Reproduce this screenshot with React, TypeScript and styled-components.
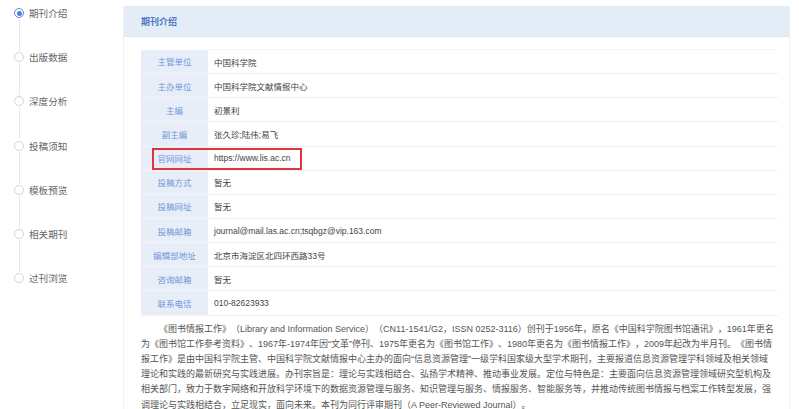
import styled, { createGlobalStyle } from "styled-components";

const GlobalStyle = createGlobalStyle`
  html, body {
    margin: 0;
    padding: 0;
    background: #fff;
  }
  body {
    font-family: "Liberation Sans", "Noto Sans CJK SC", sans-serif;
    color: #333;
  }
`;

const Page = styled.div`
  display: flex;
  width: 799px;
  height: 409px;
  overflow: hidden;
`;

const Sidebar = styled.ul`
  width: 123px;
  flex-shrink: 0;
  margin: 0;
  padding: 3px 0 0 14px;
  box-sizing: border-box;
  list-style: none;
  display: flex;
  flex-direction: column;
  gap: 24.2px;
`;

const NavItem = styled.li<{ $last?: boolean }>`
  position: relative;
  height: 20px;
  display: flex;
  align-items: center;
  gap: 5px;
  font-size: 9.6px;
  color: #666;

  &::after {
    content: "";
    display: ${(p) => (p.$last ? "none" : "block")};
    position: absolute;
    left: 5px;
    top: 16px;
    width: 1px;
    height: 32px;
    background: #e8e8e8;
  }
`;

const Radio = styled.span<{ $active?: boolean }>`
  width: 10px;
  height: 10px;
  box-sizing: border-box;
  border-radius: 50%;
  border: 1px solid ${(p) => (p.$active ? "#5b8ad8" : "#d4d4d4")};
  background: #fff;
  display: flex;
  align-items: center;
  justify-content: center;

  &::before {
    content: "";
    display: ${(p) => (p.$active ? "block" : "none")};
    width: 5px;
    height: 5px;
    border-radius: 50%;
    background: #4f80d4;
  }
`;

const Panel = styled.section`
  flex: 1;
  margin: 6px 9px 0 0;
  border-left: 1px solid #f2f2f2;
  border-right: 1px solid #eef0f3;
  display: flex;
  flex-direction: column;
`;

const PanelHeader = styled.div`
  height: 30px;
  flex-shrink: 0;
  display: flex;
  align-items: center;
  padding-left: 17px;
  background: #e4ecf7;
  border-bottom: 1px solid #dfe7f3;
  font-size: 9px;
  font-weight: bold;
  color: #4b79c4;
`;

const PanelBody = styled.div`
  padding: 12px 11px 0 17px;
`;

const InfoTable = styled.table`
  width: 100%;
  border-collapse: collapse;
  font-size: 8.5px;
`;

const Row = styled.tr`
  height: 24.15px;
`;

const Label = styled.td`
  position: relative;
  width: 67px;
  padding: 0;
  text-align: center;
  background: #e8eef8;
  color: #7097d8;
  border-bottom: 1px solid #f2f5fb;
`;

const Value = styled.td`
  padding: 0 0 0 6px;
  color: #444;
  border-bottom: 1px solid #eef0f3;
  border-top: 1px solid #f3f4f6;
`;

const Highlight = styled.span`
  position: absolute;
  left: 11px;
  top: 1px;
  width: 150px;
  height: 22px;
  box-sizing: border-box;
  border: 2px solid #e0343a;
  pointer-events: none;
`;

const Intro = styled.p`
  margin: 6px 0 0;
  font-size: 9px;
  line-height: 15.2px;
  text-indent: 2em;
  text-spacing-trim: space-all;
  color: #555;
`;

const navItems = ["期刊介绍", "出版数据", "深度分析", "投稿须知", "模板预览", "相关期刊", "过刊浏览"];

const infoRows: { label: string; value: string; mark?: boolean }[] = [
  { label: "主管单位", value: "中国科学院" },
  { label: "主办单位", value: "中国科学院文献情报中心" },
  { label: "主编", value: "初景利" },
  { label: "副主编", value: "张久珍;陆伟;易飞" },
  { label: "官网网址", value: "https://www.lis.ac.cn", mark: true },
  { label: "投稿方式", value: "暂无" },
  { label: "投稿网址", value: "暂无" },
  { label: "投稿邮箱", value: "journal@mail.las.ac.cn;tsqbgz@vip.163.com" },
  { label: "编辑部地址", value: "北京市海淀区北四环西路33号" },
  { label: "咨询邮箱", value: "暂无" },
  { label: "联系电话", value: "010-82623933" },
];

export default function App() {
  return (
    <>
      <GlobalStyle />
      <Page>
        <Sidebar>
          {navItems.map((item, i) => (
            <NavItem key={item} $last={i === navItems.length - 1}>
              <Radio $active={i === 0} />
              {item}
            </NavItem>
          ))}
        </Sidebar>

        <Panel>
          <PanelHeader>期刊介绍</PanelHeader>
          <PanelBody>
            <InfoTable>
              <tbody>
                {infoRows.map((row) => (
                  <Row key={row.label}>
                    <Label>
                      {row.label}
                      {row.mark && <Highlight />}
                    </Label>
                    <Value>{row.value}</Value>
                  </Row>
                ))}
              </tbody>
            </InfoTable>
            <Intro>
              《图书情报工作》（Library and Information Service）（CN11-1541/G2，ISSN 0252-3116）创刊于1956年，原名《中国科学院图书馆通讯》，1961年更名为《图书馆工作参考资料》、1967年-1974年因“文革”停刊、1975年更名为《图书馆工作》、1980年更名为《图书情报工作》，2009年起改为半月刊。《图书情报工作》是由中国科学院主管、中国科学院文献情报中心主办的面向“信息资源管理”一级学科国家级大型学术期刊，主要报道信息资源管理学科领域及相关领域
              <br />
              理论和实践的最新研究与实践进展。办刊宗旨是：理论与实践相结合、弘扬学术精神、推动事业发展。定位与特色是：主要面向信息资源管理领域研究型机构及相关部门，致力于数字网络和开放科学环境下的数据资源管理与服务、知识管理与服务、情报服务、智能服务等，并推动传统图书情报与档案工作转型发展，强调理论与实践相结合，立足现实，面向未来。本刊为同行评审期刊（A Peer-Reviewed Journal）。
            </Intro>
          </PanelBody>
        </Panel>
      </Page>
    </>
  );
}
